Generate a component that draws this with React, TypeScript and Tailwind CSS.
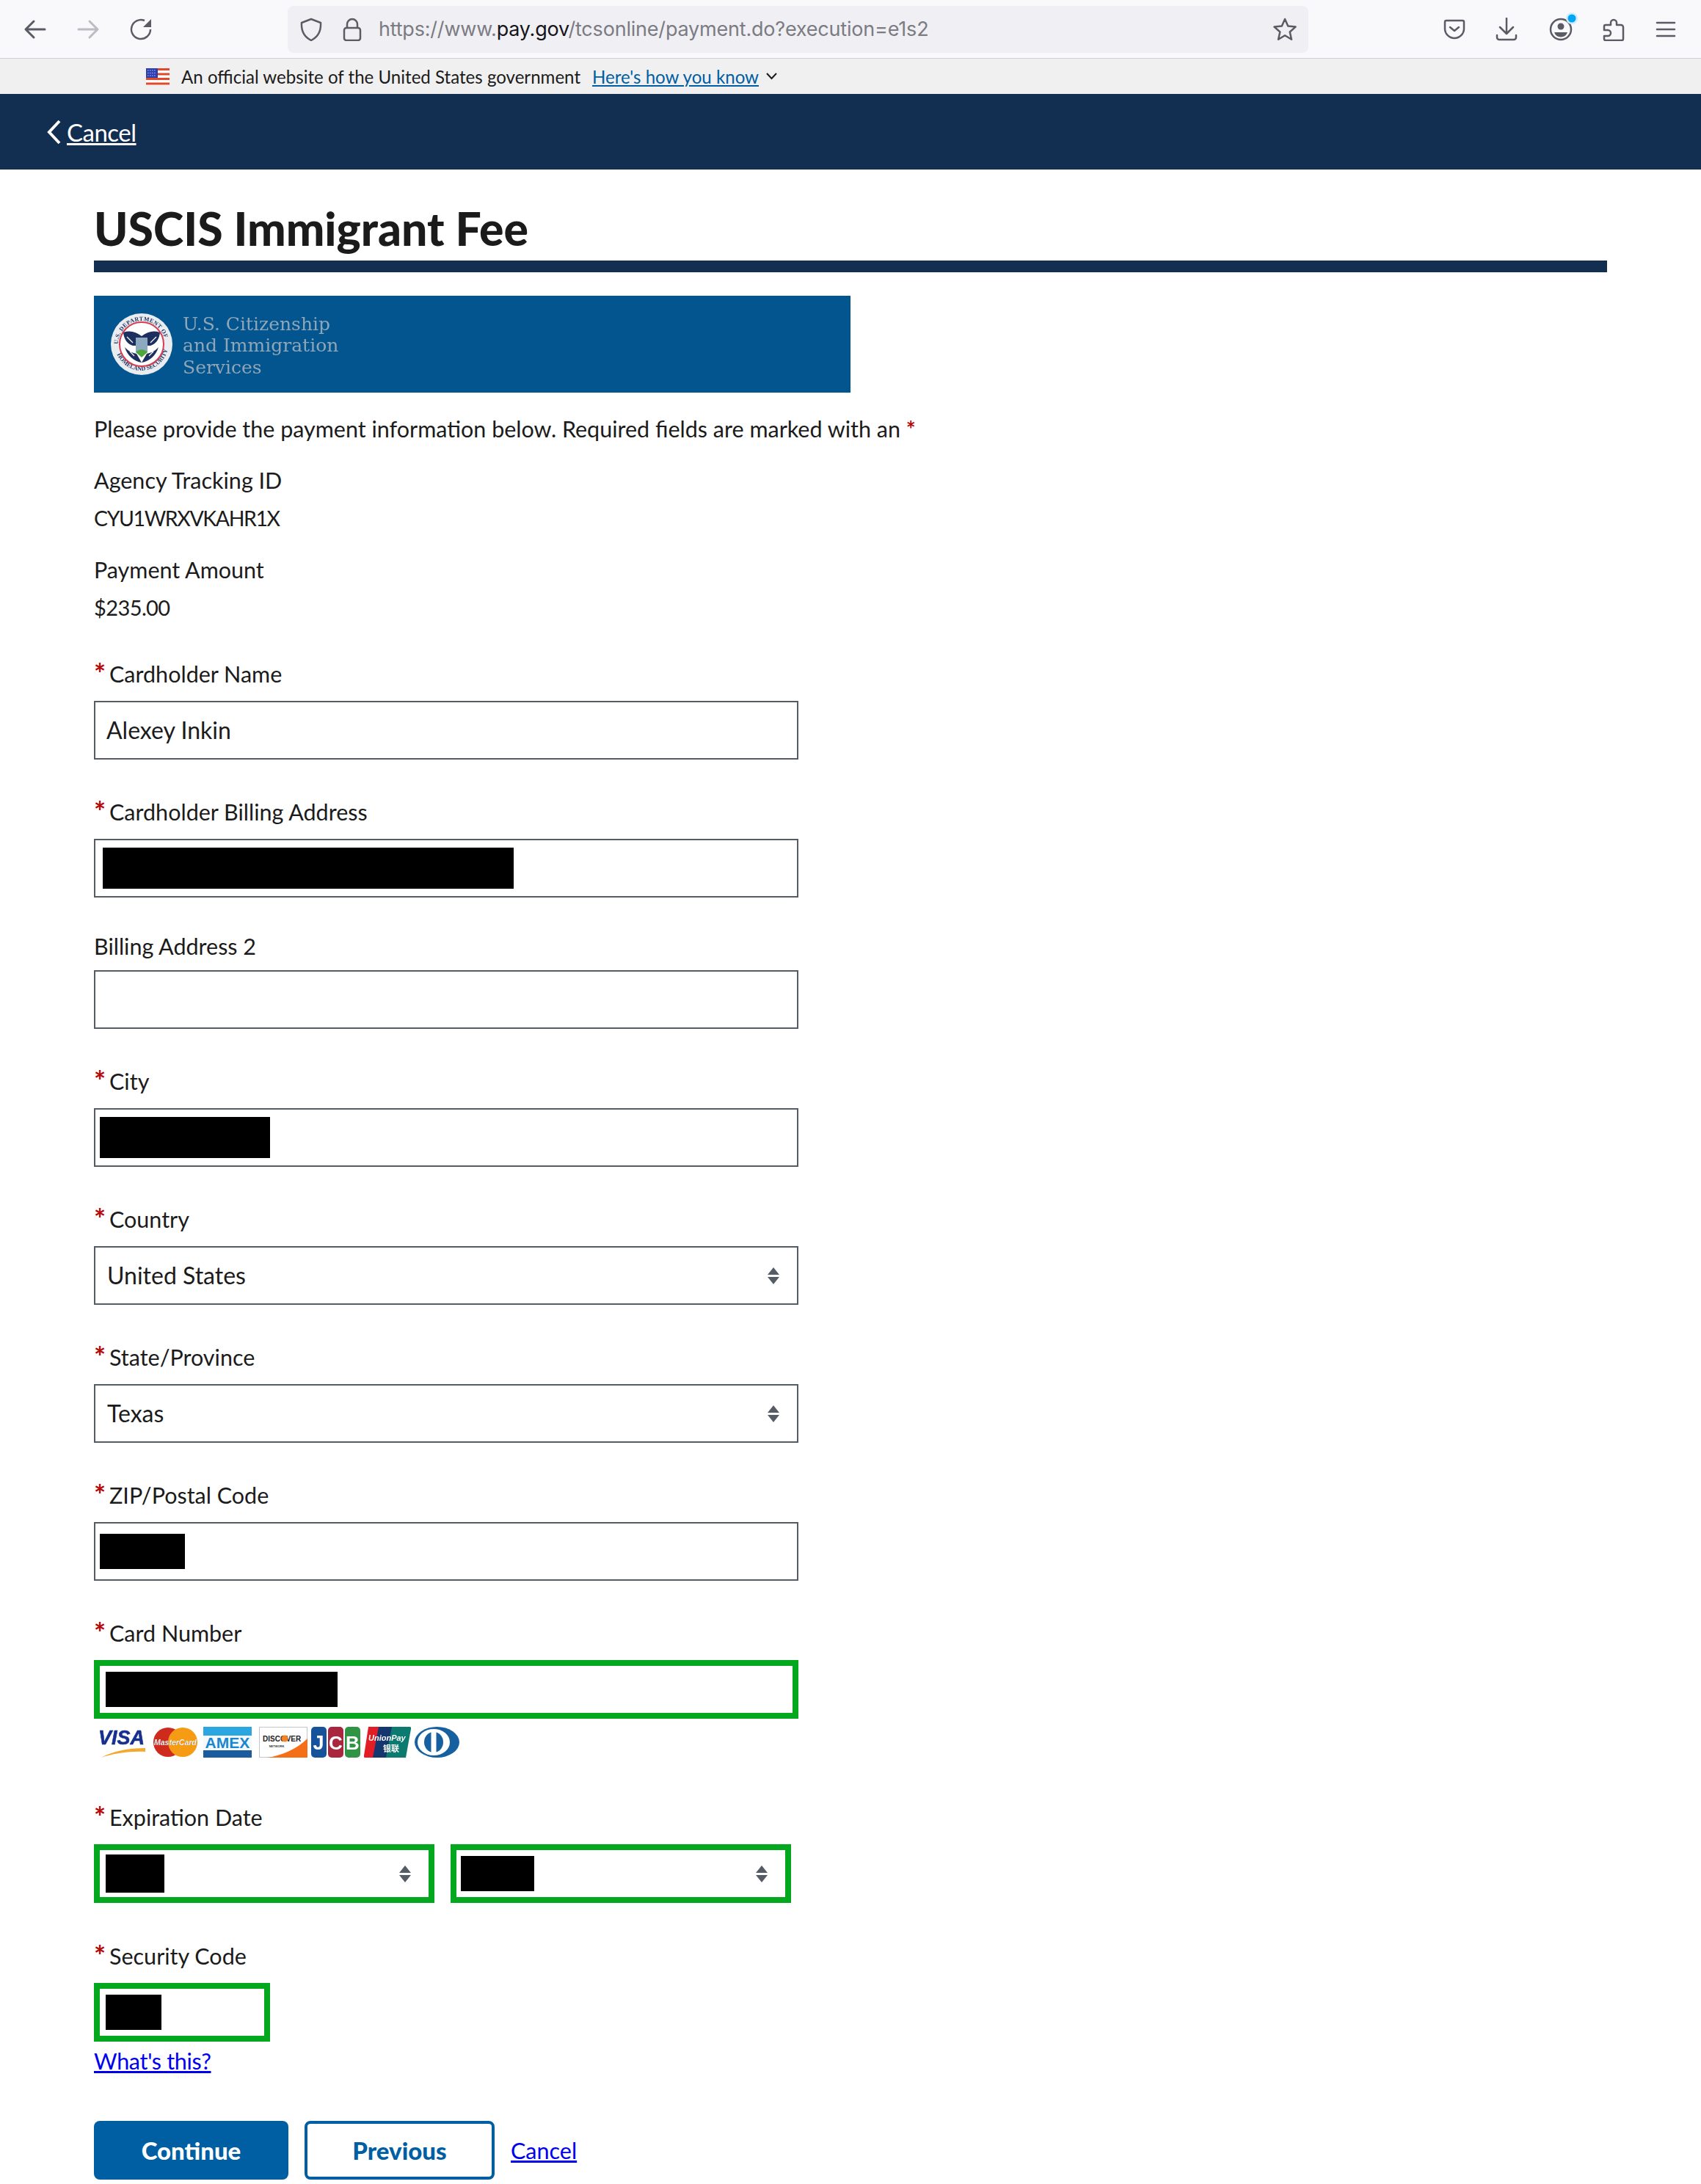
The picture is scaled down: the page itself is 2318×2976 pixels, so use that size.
import type { ReactNode } from "react";

const ICON = "#5b5b66";

function Arrow({ flip, color }: { flip?: boolean; color: string }) {
  return (
    <svg viewBox="0 0 32 32" className="h-8 w-8 shrink-0" fill="none" stroke={color} strokeWidth="3" strokeLinecap="round" strokeLinejoin="round">
      {flip ? <path d="M3 16h25M18 5l11 11-11 11" /> : <path d="M29 16H4M14 5 3 16l11 11" />}
    </svg>
  );
}

function Toolbar() {
  return (
    <div className="flex h-[79px] items-center bg-[#f9f9fb]">
      <div className="ml-8"><Arrow color={ICON} /></div>
      <div className="ml-10"><Arrow flip color="#bcbcc2" /></div>
      <svg viewBox="0 0 32 32" className="ml-10 h-8 w-8 shrink-0" fill="none" stroke={ICON} strokeWidth="2.5">
        <path d="M29 16A13 13 0 1 1 21 4" />
        <path d="M30 2v11H19z" fill={ICON} stroke="none" />
      </svg>
      <div className="ml-[184px] flex h-16 w-[1391px] items-center rounded-lg bg-[#f0f0f4]">
        <svg viewBox="0 0 32 32" className="ml-4 h-8 w-8 shrink-0" fill="none" stroke={ICON} strokeWidth="2.5" strokeLinejoin="round">
          <path d="M16 2l13 5c.6 10-3 19-13 24C6 26 2.400 17 3 7z" />
        </svg>
        <svg viewBox="0 0 32 32" className="ml-6 h-8 w-8 shrink-0" fill="none" stroke={ICON} strokeWidth="2.500">
          <rect x="5" y="14" width="22" height="17" rx="3" />
          <path d="M9 14V9a7 7 0 0 1 14 0v5" />
        </svg>
        <p className="ml-5 pt-px font-['Inter',sans-serif] text-[27px] tracking-[-0.2px] text-[#7b7b83]">
          https://www.<span className="text-[#15141a]">pay.gov</span>/tcsonline/payment.do?execution=e1s2
        </p>
        <svg viewBox="0 0 32 32" className="ml-auto mr-4 h-8 w-8 shrink-0" fill="none" stroke={ICON} strokeWidth="2.500" strokeLinejoin="round">
          <path d="M16 2l4.200 9.600 10.300 1-7.800 6.900 2.300 10.200-9-5.400-9 5.400 2.300-10.200-7.800-6.900 10.300-1z" />
        </svg>
      </div>
      <svg viewBox="0 0 32 32" className="ml-[183px] h-8 w-8 shrink-0" fill="none" stroke={ICON} strokeWidth="2.500" strokeLinecap="round" strokeLinejoin="round">
        <path d="M5 4h22a2 2 0 0 1 2 2v9a13 13 0 0 1-26 0V6a2 2 0 0 1 2-2z" />
        <path d="M10 13l6 5 6-5" />
      </svg>
      <svg viewBox="0 0 32 32" className="ml-[39px] h-8 w-8 shrink-0" fill="none" stroke={ICON} strokeWidth="2.500" strokeLinecap="round" strokeLinejoin="round">
        <path d="M16 1v21M7 13l9 9 9-9M3 24v3a3 3 0 0 0 3 3h20a3 3 0 0 0 3-3v-3" />
      </svg>
      <svg viewBox="0 0 32 32" className="ml-[42px] h-8 w-8 shrink-0 overflow-visible" fill="none" stroke={ICON} strokeWidth="2.500">
        <circle cx="16" cy="16" r="14" />
        <circle cx="16" cy="12" r="4.500" fill={ICON} stroke="none" />
        <path d="M7 20h18a9.500 9.500 0 0 1-18 0z" fill={ICON} stroke="none" />
        <circle cx="31" cy="1" r="8" fill="#cdeeff" stroke="none" />
        <circle cx="31" cy="1" r="5.500" fill="#00a6f5" stroke="none" />
      </svg>
      <svg viewBox="0 0 32 32" className="ml-10 h-8 w-8 shrink-0" fill="none" stroke={ICON} strokeWidth="2.500" strokeLinejoin="round">
        <path d="M5 10h7V7a4 4 0 0 1 8 0v3h6a3 3 0 0 1 3 3v16a2 2 0 0 1-2 2H5a2 2 0 0 1-2-2v-4h5a4 4 0 0 0 0-8H3v-5a2 2 0 0 1 2-2z" />
      </svg>
      <svg viewBox="0 0 32 32" className="ml-[39px] h-8 w-8 shrink-0" fill="none" stroke={ICON} strokeWidth="2.500" strokeLinecap="round">
        <path d="M4 7h24M4 16h24M4 25h24" />
      </svg>
    </div>
  );
}

function Flag() {
  return (
    <svg viewBox="0 0 32 23" className="h-[23px] w-8 shrink-0">
      <rect width="32" height="23" fill="#fff" />
      <path d="M0 1.500h32M0 8h32M0 14.500h32M0 21h32" stroke="#e0492c" strokeWidth="2.800" />
      <rect width="16" height="13" fill="#2b3fb0" />
      <path d="M2 3h12M2 6.500h12M2 10h12" stroke="#b9c2ee" strokeWidth="1.200" strokeDasharray="1.500 1.500" />
    </svg>
  );
}

function Seal() {
  return (
    <svg viewBox="0 0 84 84" className="h-[84px] w-[84px] shrink-0 blur-[0.4px]">
      <defs>
        <path id="ringTop" d="M10 42a32 32 0 0 1 64 0" />
        <path id="ringBottom" d="M6 42a36 36 0 0 0 72 0" />
      </defs>
      <circle cx="42" cy="42" r="42" fill="#e9edf0" />
      <text fontSize="8" fontWeight="700" fill="#1c2f5f" fontFamily="'Liberation Serif', serif" textLength="92">
        <textPath href="#ringTop">U.S. DEPARTMENT OF</textPath>
      </text>
      <text fontSize="8" fontWeight="700" fill="#1c2f5f" fontFamily="'Liberation Serif', serif">
        <textPath href="#ringBottom" startOffset="14">HOMELAND SECURITY</textPath>
      </text>
      <circle cx="42" cy="42" r="30" fill="#fff" stroke="#d83a50" strokeWidth="2" />
      <path d="M17 26c9-3 17-1 25 5 8-6 16-8 25-5-1 10-6 16-13 18H30c-7-2-12-8-13-18z" fill="#1c2f5f" />
      <path d="M19 46c5 6 11 8 16 9l7 12c-10-1-20-10-23-21zM65 46c-5 6-11 8-16 9l-7 12c10-1 20-10 23-21z" fill="#1c2f5f" />
      <path d="M22 32l8 8M62 32l-8 8M26 52l6 6M58 52l-6 6" stroke="#fff" strokeWidth="1.200" />
      <rect x="34" y="33" width="16" height="20" fill="#8ca9c0" />
      <path d="M34 53c5-5 11-5 16 0l-8 7z" fill="#4fa83d" />
      <circle cx="42" cy="26" r="3.500" fill="#fff" />
    </svg>
  );
}

function CardLogos() {
  return (
    <div className="mt-[11px] flex h-[42px] items-stretch pl-[5px] blur-[0.4px]">
      <svg viewBox="0 0 65 42" className="w-[65px] shrink-0">
        <text x="1" y="24" fontSize="27" fontWeight="900" fontStyle="italic" fill="#17308f" stroke="#17308f" strokeWidth="0.600" fontFamily="'Liberation Sans', sans-serif">VISA</text>
        <path d="M5 42c16-9 36-13 60-13v5c-22-1-42 2-60 8z" fill="#f3a92e" />
      </svg>
      <svg viewBox="0 0 62 42" className="ml-[10px] w-[62px] shrink-0">
        <circle cx="21" cy="21" r="20" fill="#cf2a1e" />
        <circle cx="41" cy="21" r="20" fill="#f59b14" />
        <text x="2" y="25" fontSize="10.500" fontStyle="italic" fontWeight="700" fill="#fff" stroke="#888" strokeWidth="0.200" fontFamily="'Liberation Sans', sans-serif">MasterCard</text>
      </svg>
      <svg viewBox="0 0 66 42" className="ml-[7px] w-[66px] shrink-0">
        <rect width="66" height="42" fill="#1f7fc4" />
        <rect width="66" height="12" fill="#2ba6e0" />
        <rect y="32" width="66" height="10" fill="#1b5c9e" />
        <rect x="0" y="12" width="66" height="20" fill="#f4fafe" />
        <text x="2.500" y="29" fontSize="21" fontWeight="700" fill="#1a87cc" fontFamily="'Liberation Sans', sans-serif">AMEX</text>
      </svg>
      <svg viewBox="0 0 66 42" className="ml-[10px] w-[66px] shrink-0">
        <rect x="0.500" y="0.500" width="65" height="41" fill="#fff" stroke="#c4c4cc" />
        <path d="M10 42C30 40 52 30 66 16v26z" fill="#f46f18" />
        <text x="5" y="20" fontSize="10" fontWeight="700" fill="#222" fontFamily="'Liberation Sans', sans-serif">DISCOVER</text>
        <circle cx="35" cy="16" r="4.500" fill="#f58220" />
        <text x="24" y="28" textAnchor="middle" fontSize="4" fontWeight="700" fill="#333" fontFamily="'Liberation Sans', sans-serif">NETWORK</text>
      </svg>
      <svg viewBox="0 0 67 42" className="ml-[5px] w-[67px] shrink-0">
        <rect x="0" width="21" height="42" rx="5" fill="#17539b" />
        <rect x="23" width="21" height="42" rx="5" fill="#a9263f" />
        <rect x="46" width="21" height="42" rx="5" fill="#2f9443" />
        <text x="10" y="31" textAnchor="middle" fontSize="27" fontWeight="700" fill="#fff" fontFamily="'Liberation Sans', sans-serif">J</text>
        <text x="33.500" y="31" textAnchor="middle" fontSize="26" fontWeight="700" fill="#fff" fontFamily="'Liberation Sans', sans-serif">C</text>
        <text x="56.500" y="31" textAnchor="middle" fontSize="26" fontWeight="700" fill="#fff" fontFamily="'Liberation Sans', sans-serif">B</text>
      </svg>
      <svg viewBox="0 0 64 42" className="ml-[5px] w-[64px] shrink-0">
        <path d="M6 0h18l-8 42H2a2 2 0 0 1-2-3z" fill="#e21d26" />
        <path d="M20 0h20l-8 42H12z" fill="#15376f" />
        <path d="M38 0h24a2 2 0 0 1 2 3l-7 39H30z" fill="#0d7a70" />
        <text x="6" y="19" fontSize="11" fontStyle="italic" fontWeight="700" fill="#fff" fontFamily="'Liberation Sans', sans-serif">UnionPay</text>
        <text x="37" y="34" textAnchor="middle" fontSize="11" fontWeight="700" fill="#fff" fontFamily="'Noto Sans CJK SC', sans-serif">银联</text>
      </svg>
      <svg viewBox="0 0 61 42" className="ml-[5px] w-[61px] shrink-0">
        <ellipse cx="30.500" cy="21" rx="30.500" ry="21" fill="#17609f" />
        <ellipse cx="26" cy="21" rx="22" ry="18" fill="#fff" />
        <ellipse cx="26" cy="21" rx="13" ry="14" fill="#17609f" />
        <rect x="22.500" y="6" width="7" height="30" fill="#fff" />
      </svg>
    </div>
  );
}

function Updown({ className = "" }: { className?: string }) {
  return (
    <svg viewBox="0 0 16 23" className={`h-[23px] w-4 shrink-0 ${className}`} fill="#565c65">
      <path d="M8 0l8 10H0zM0 13h16l-8 10z" />
    </svg>
  );
}

function Field({ label, required = true, children, top }: { label: string; required?: boolean; children: ReactNode; top?: string }) {
  const margin = top ?? (required ? "mt-[49px]" : "mt-[44px]");
  return (
    <div className={margin}>
      <div className={`flex h-11 items-center ${required ? "mb-[15px]" : "mb-[11px]"}`}>
        {required && <span className="mt-[-2px] w-[21px] text-[38px] font-bold leading-none text-[#b50909]">*</span>}
        <label>{label}</label>
      </div>
      {children}
    </div>
  );
}

function Box({ children, className = "" }: { children?: ReactNode; className?: string }) {
  return <div className={`flex h-20 w-[960px] items-center border-2 border-[#565c65] bg-white text-[32px] ${className}`}>{children}</div>;
}

function Redacted({ className }: { className: string }) {
  return <div className={`shrink-0 bg-black ${className}`} />;
}

export default function App() {
  return (
    <div className="h-[2976px] w-[2318px] overflow-hidden bg-white font-['Lato',sans-serif] text-[30.500px] leading-[52px] text-[#1b1b1b]">
      <Toolbar />
      <div className="h-px bg-[#cfcfd8]" />
      <div className="flex h-12 items-center bg-[#f0f0f0] pl-[199px] text-[24.100px]">
        <Flag />
        <span className="ml-4 pt-px">An official website of the United States government</span>
        <a className="ml-4 pt-px text-[#005ea2] underline">Here's how you know</a>
        <svg viewBox="0 0 17 10" className="ml-[9px] h-[10px] w-[17px]" fill="none" stroke="#1b1b1b" strokeWidth="2">
          <path d="M2 1l6.500 7L15 1" />
        </svg>
      </div>
      <div className="flex h-[103px] items-center bg-[#122e51] pl-[63px] text-white">
        <svg viewBox="0 0 20 34" className="h-[34px] w-5" fill="none" stroke="#fff" strokeWidth="4">
          <path d="M18 2L4 17l14 15" />
        </svg>
        <a className="ml-2 text-[33px] tracking-[-0.5px] underline">Cancel</a>
      </div>

      <main className="pl-[128px]">
        <h1 className="mt-10 text-[62.500px] font-black leading-[80px]">USCIS Immigrant Fee</h1>
        <div className="mt-1 h-4 w-[2062px] bg-[#122e51]" />
        <div className="mt-8 flex h-[132px] w-[1031px] items-center bg-[#03558f] pl-[23px]">
          <Seal />
          <div className="ml-[14px] pt-1 font-['DejaVu_Serif',serif] text-[25px] leading-[29.500px] text-[#8fa6b8] blur-[0.4px]">
            <p>U.S. Citizenship</p>
            <p>and Immigration</p>
            <p>Services</p>
          </div>
        </div>

        <p className="mt-[23px]">
          Please provide the payment information below. Required fields are marked with an{" "}
          <span className="font-bold text-[#b50909]">*</span>
        </p>
        <p className="mt-[18px]">Agency Tracking ID</p>
        <p className="text-[28.500px] tracking-[-1.4px]">CYU1WRXVKAHR1X</p>
        <p className="mt-[18px]">Payment Amount</p>
        <p className="text-[29px] tracking-[-0.6px]">$235.00</p>

        <div className="-mt-[7px]">
          <Field label="Cardholder Name">
            <Box><span className="ml-[15px]">Alexey Inkin</span></Box>
          </Field>
          <Field label="Cardholder Billing Address">
            <Box><Redacted className="ml-[10px] h-14 w-[560px]" /></Box>
          </Field>
          <Field label="Billing Address 2" required={false}>
            <Box />
          </Field>
          <Field label="City">
            <Box><Redacted className="ml-[6px] h-14 w-[232px]" /></Box>
          </Field>
          <Field label="Country">
            <Box className="justify-between pl-4 pr-6">
              <span>United States</span>
              <Updown />
            </Box>
          </Field>
          <Field label="State/Province">
            <Box className="justify-between pl-4 pr-6">
              <span>Texas</span>
              <Updown />
            </Box>
          </Field>
          <Field label="ZIP/Postal Code">
            <Box><Redacted className="ml-[6px] h-12 w-[116px]" /></Box>
          </Field>
          <Field label="Card Number">
            <div className="flex h-20 w-[960px] items-center border-8 border-[#03a81e]">
              <Redacted className="ml-2 h-12 w-[316px]" />
            </div>
            <CardLogos />
          </Field>
          <Field label="Expiration Date" top="mt-[59px]">
            <div className="flex gap-[22px]">
              <div className="flex h-20 w-[464px] items-center justify-between border-8 border-[#03a81e] pl-2 pr-6">
                <Redacted className="h-[52px] w-20" />
                <Updown />
              </div>
              <div className="flex h-20 w-[464px] items-center justify-between border-8 border-[#03a81e] pl-[6px] pr-6">
                <Redacted className="h-12 w-[100px]" />
                <Updown />
              </div>
            </div>
          </Field>
          <Field label="Security Code" top="mt-[50px]">
            <div className="flex h-20 w-[240px] items-center border-8 border-[#03a81e] pl-2">
              <Redacted className="h-12 w-[76px]" />
            </div>
          </Field>
        </div>

        <a className="block w-fit tracking-[-0.3px] text-[#0000ee] underline">What's this?</a>

        <div className="mt-14 flex items-center">
          <button className="h-20 w-[265px] rounded-lg bg-[#005ea2] text-[33px] font-black text-white">Continue</button>
          <button className="ml-[22px] h-20 w-[259px] rounded-lg border-4 border-[#005ea2] bg-white text-[33px] font-black text-[#005ea2]">Previous</button>
          <a className="ml-[22px] text-[#0000ee] underline">Cancel</a>
        </div>
      </main>
    </div>
  );
}
